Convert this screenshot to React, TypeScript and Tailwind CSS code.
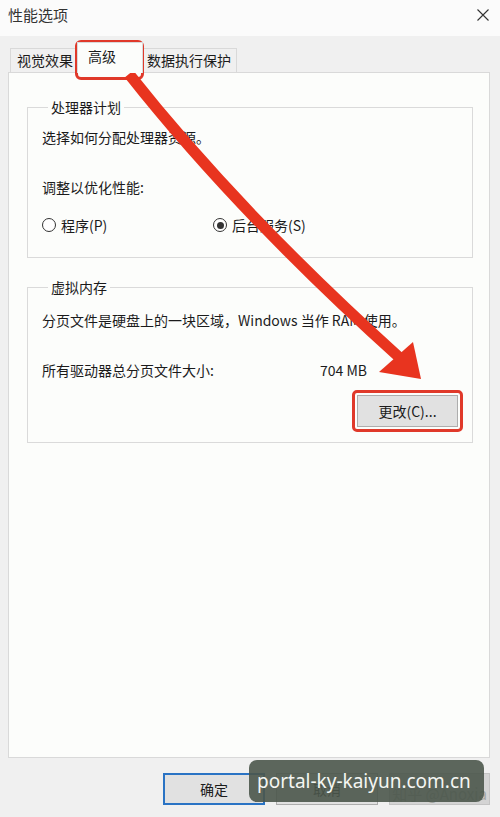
import React from "react";

const FONT = '"Noto Sans CJK SC", "Noto Sans", sans-serif';

function Radio({ checked, label }: { checked?: boolean; label: string }) {
  return (
    <div className="flex items-center gap-[5px]">
      <span className="flex h-[14px] w-[14px] items-center justify-center rounded-full border border-[#333] bg-white">
        {checked && <span className="h-[7px] w-[7px] rounded-full bg-[#333]" />}
      </span>
      <span>{label}</span>
    </div>
  );
}

function Group({ title, children }: { title: string; children: React.ReactNode }) {
  return (
    <fieldset className="border border-[#dadada] px-[14px]">
      <legend className="ml-[6px] px-[3px] leading-[20px]">{title}</legend>
      {children}
    </fieldset>
  );
}

export default function App() {
  return (
    <div
      className="relative h-[817px] w-[500px] overflow-hidden bg-[#f0f0f0] text-[14px] text-[#1b1b1b]"
      style={{ fontFamily: FONT }}
    >
      {/* title bar */}
      <div className="flex h-[36px] items-center justify-between bg-[#fbfbfb] pl-[8px] pr-[11px]">
        <span className="mt-[-6px] text-[15px] text-[#333]">性能选项</span>
        <svg width="12" height="12" viewBox="0 0 12 12" className="mt-[-6px]">
          <path d="M0.5 0.5 L11.5 11.5 M11.5 0.5 L0.5 11.5" stroke="#333" strokeWidth="1.1" />
        </svg>
      </div>

      {/* tabs */}
      <div className="flex h-[36px] items-end pl-[10px]">
        <div className="flex h-[24px] w-[67px] items-center border border-b-0 border-[#d9d9d9] bg-[#f0f0f0] pl-[6px]">
          视觉效果
        </div>
        <div className="relative z-10 mb-[-1px] flex h-[31px] w-[66px] items-start border border-b-0 border-[#d9d9d9] bg-[#fcfdfb] pl-[10px] pt-[3px]">
          高级
        </div>
        <div className="flex h-[24px] w-[94px] items-center border border-b-0 border-l-0 border-[#d9d9d9] bg-[#f0f0f0] pl-[4px]">
          数据执行保护
        </div>
      </div>

      {/* tab page */}
      <div className="ml-[8px] mr-[10px] flex h-[686px] flex-col gap-[19px] border border-[#d9d9d9] bg-[#fcfdfb] pl-[18px] pr-[16px] pt-[24px]">
        <Group title="处理器计划">
          <div className="pb-[22px] leading-[20px]">
            <div className="mt-[10px]">选择如何分配处理器资源。</div>
            <div className="mt-[30px]">调整以优化性能:</div>
            <div className="mt-[18px] flex">
              <div className="w-[171px]">
                <Radio label="程序(P)" />
              </div>
              <Radio checked label="后台服务(S)" />
            </div>
          </div>
        </Group>

        <Group title="虚拟内存">
          <div className="pb-[10px] leading-[20px]">
            <div className="mt-[13px]">分页文件是硬盘上的一块区域，Windows 当作 RAM 使用。</div>
            <div className="mt-[30px] flex">
              <span className="w-[278px]">所有驱动器总分页文件大小:</span>
              <span>704 MB</span>
            </div>
            <div className="mt-[10px] flex justify-end">
              <div className="mr-[-5px] rounded-[5px] border-[3px] border-[#e0392a] p-[2px]">
                <button className="flex h-[32px] w-[101px] items-center justify-center border border-[#adadad] bg-[#e1e1e1]">
                  更改(C)...
                </button>
              </div>
            </div>
          </div>
        </Group>
      </div>

      {/* dialog buttons */}
      <div className="mt-[15px] flex justify-end gap-[11px] pr-[10px]">
        <button className="flex h-[32px] w-[102px] items-center justify-center border-2 border-[#2a73c4] bg-[#e1e1e1]">
          确定
        </button>
        <button className="flex h-[32px] w-[102px] items-center justify-center border border-[#adadad] bg-[#e1e1e1]">
          取消
        </button>
        <button className="flex h-[32px] w-[101px] items-end justify-center border border-[#c4c4c4] bg-[#d4d4d4] pb-[1px] text-[15px] leading-[18px] text-[#a2a6a2]">
          知乎 @Anoxia
        </button>
      </div>

      {/* annotation: box around the selected tab */}
      <div className="pointer-events-none absolute left-[75px] top-[40px] h-[40px] w-[69px] rounded-[6px] border-[3px] border-[#e0392a]" />

      {/* annotation: arrow */}
      <svg className="pointer-events-none absolute left-0 top-0" width="500" height="817">
        <path d="M129 74 Q238 212 400 358" stroke="#e8341f" strokeWidth="11" fill="none" />
        <polygon points="421,379 379,372 413,342" fill="#e8341f" />
      </svg>

      {/* site watermark */}
      <div
        className="absolute left-[249px] top-[760px] flex h-[42px] w-[235px] items-center whitespace-nowrap rounded-[8px] bg-[#4b574b]/90 pl-[8px] text-[19px] text-[#f4f6f2]"
        style={{ fontFamily: '"Noto Sans", sans-serif' }}
      >
        portal-ky-kaiyun.com.cn
      </div>
    </div>
  );
}
